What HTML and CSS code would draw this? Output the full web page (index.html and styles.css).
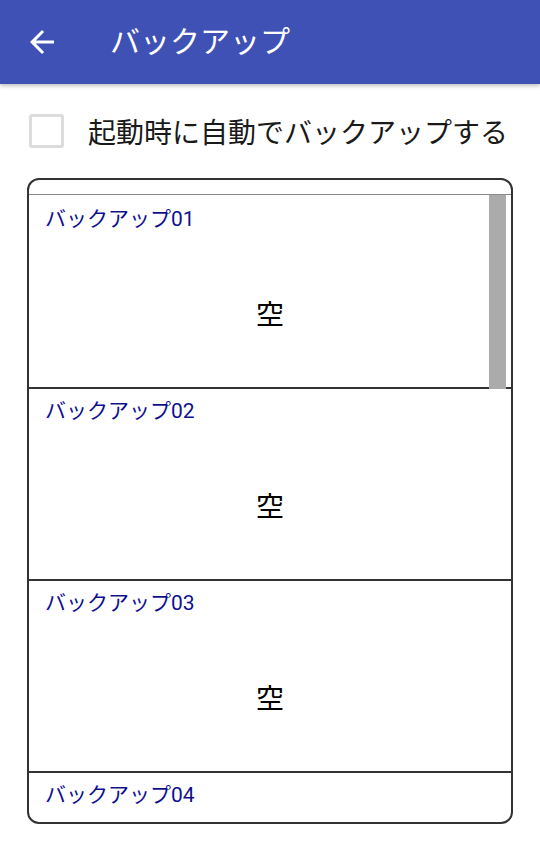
FILE: index.html
```html
<!DOCTYPE html>
<html lang="ja">

<head>
    <meta charset="UTF-8">
    <meta name="viewport" content="width=device-width, initial-scale=1.0">
    <title>バックアップ</title>
    <link rel="stylesheet" href="styles.css">
</head>

<body>

    <!-- App bar -->
    <header class="app-bar">
        <svg class="back-icon" viewBox="0 0 24 24" width="36" height="36">
            <path d="M20 11H7.83l5.59-5.59L12 4l-8 8 8 8 1.41-1.41L7.83 13H20v-2z" fill="#fff" />
        </svg>
        <h1 class="app-title">バックアップ</h1>
    </header>

    <!-- Auto backup option -->
    <label class="auto-row">
        <span class="check-box"></span>
        <span class="auto-label">起動時に自動でバックアップする</span>
    </label>

    <!-- Backup slots -->
    <div class="slot-frame">
        <div class="slot-list">
            <div class="slot">
                <div class="slot-name">バックアップ01</div>
                <div class="slot-body">空</div>
            </div>
            <div class="slot">
                <div class="slot-name">バックアップ02</div>
                <div class="slot-body">空</div>
            </div>
            <div class="slot">
                <div class="slot-name">バックアップ03</div>
                <div class="slot-body">空</div>
            </div>
            <div class="slot">
                <div class="slot-name">バックアップ04</div>
                <div class="slot-body">空</div>
            </div>
            <div class="scroll-thumb"></div>
        </div>
    </div>

</body>

</html>
```

FILE: styles.css
```css
* {
    margin: 0;
    padding: 0;
    box-sizing: border-box;
}

body {
    width: 540px;
    height: 850px;
    overflow: hidden;
    background: #fff;
    font-family: Roboto, "Noto Sans CJK JP", sans-serif;
    color: #111;
}

/* App bar */
.app-bar {
    height: 84px;
    background: #3f51b5;
    display: flex;
    align-items: center;
    padding-left: 24px;
    gap: 50px;
    box-shadow: 0 2px 4px rgba(0, 0, 0, 0.25);
    position: relative;
    z-index: 2;
}

.back-icon {
    display: block;
    flex: none;
}

.app-title {
    font-size: 30px;
    font-weight: normal;
    color: #fff;
    line-height: 1;
}

/* Auto backup row */
.auto-row {
    display: flex;
    align-items: center;
    gap: 24px;
    height: 48px;
    margin: 23px 0 23px 29px;
}

.check-box {
    width: 35px;
    height: 34px;
    border: 3px solid #dcdcdc;
    border-radius: 3px;
    flex: none;
}

.auto-label {
    font-size: 28px;
    color: #1a1a1a;
}

/* Slot frame */
.slot-frame {
    margin: 0 27px;
    height: 646px;
    border: 2px solid #333;
    border-radius: 12px;
    padding-top: 14px;
    overflow: hidden;
}

.slot-list {
    position: relative;
    border-top: 1px solid #8a8a8a;
    padding-top: 2px;
}

.slot {
    height: 192px;
    border-bottom: 2px solid #333;
    display: flex;
    flex-direction: column;
}

.slot-name {
    font-size: 21px;
    line-height: 28px;
    padding: 8px 0 0 16px;
    color: #10108f;
}

.slot-body {
    flex: 1;
    display: flex;
    align-items: center;
    justify-content: center;
    font-size: 28px;
    padding-top: 6px;
    color: #000;
}

/* Scrollbar thumb */
.scroll-thumb {
    position: absolute;
    top: 0;
    right: 5px;
    width: 17px;
    height: 194px;
    background: #ababab;
}
```
